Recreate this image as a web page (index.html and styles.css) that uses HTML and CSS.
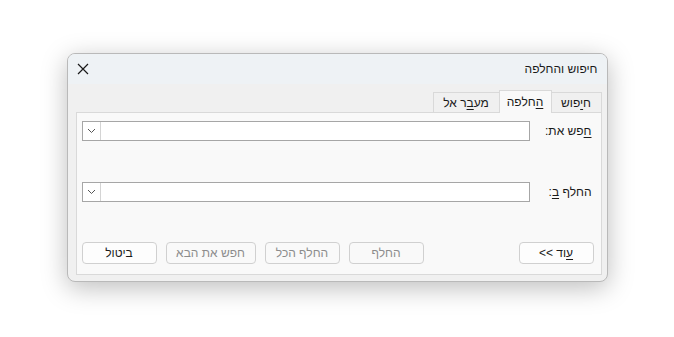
FILE: index.html
```html
<!DOCTYPE html>
<html lang="he" dir="rtl">
<head>
    <meta charset="UTF-8">
    <title>חיפוש והחלפה</title>
    <link rel="stylesheet" href="styles.css">
</head>
<body>
    <div class="dialog">
        <div class="title-bar">
            <span class="title">חיפוש והחלפה</span>
            <span class="close-button">
                <svg width="12" height="12" viewBox="0 0 12 12"><path d="M1 1 L11 11 M11 1 L1 11" stroke="#1a1a1a" stroke-width="1.2" fill="none"/></svg>
            </span>
        </div>
        <div class="dialog-body">
            <div class="tabs">
                <span class="tab tab-find">ח<u>י</u>פוש</span>
                <span class="tab tab-replace selected"><u>ה</u>חלפה</span>
                <span class="tab tab-goto">מע<u>ב</u>ר אל</span>
            </div>
            <div class="tab-panel">
                <div class="field-row">
                    <label class="field-label"><u>ח</u>פש את:</label>
                    <div class="combo">
                        <span class="combo-text"></span>
                        <span class="combo-arrow">
                            <svg width="9" height="6" viewBox="0 0 9 6"><path d="M1 1 L4.5 4.5 L8 1" stroke="#555" stroke-width="1" fill="none"/></svg>
                        </span>
                    </div>
                </div>
                <div class="field-row">
                    <label class="field-label">החלף <u>ב</u>:</label>
                    <div class="combo">
                        <span class="combo-text"></span>
                        <span class="combo-arrow">
                            <svg width="9" height="6" viewBox="0 0 9 6"><path d="M1 1 L4.5 4.5 L8 1" stroke="#555" stroke-width="1" fill="none"/></svg>
                        </span>
                    </div>
                </div>
                <div class="button-row">
                    <button class="dialog-button"><u>ע</u>וד &gt;&gt;</button>
                    <div class="button-group">
                        <button class="dialog-button" disabled>החלף</button>
                        <button class="dialog-button" disabled>החלף הכל</button>
                        <button class="dialog-button wide" disabled>חפש את הבא</button>
                        <button class="dialog-button">ביטול</button>
                    </div>
                </div>
            </div>
        </div>
    </div>
</body>
</html>
```

FILE: styles.css
```css
html, body {
    margin: 0;
    padding: 0;
}
body {
    font-family: "Liberation Sans", Arial, sans-serif;
    font-size: 12px;
    color: #1a1a1a;
    background-color: #ffffff;
    height: 337px;
    display: flex;
    align-items: center;
    justify-content: center;
}
u {
    text-decoration: underline;
    text-underline-offset: 2px;
}
.dialog {
    width: 541px;
    height: 229px;
    margin-top: -3px;
    box-sizing: border-box;
    border: 1px solid #b9b9b9;
    border-radius: 8px;
    background-color: #f0f0f0;
    box-shadow: 0 6px 26px rgba(0, 0, 0, 0.26);
    overflow: hidden;
    display: flex;
    flex-direction: column;
}
.title-bar {
    height: 31px;
    background-color: #eef2f5;
    display: flex;
    align-items: center;
    justify-content: space-between;
    padding: 0 9px 0 5px;
}
.title {
    font-size: 12px;
    padding-top: 1px;
}
.close-button {
    display: flex;
    align-items: center;
    justify-content: center;
    width: 20px;
    height: 12px;
}
.dialog-body {
    flex: 1;
    padding: 6px 5px 6px 8px;
    display: flex;
    flex-direction: column;
}
.tabs {
    display: flex;
    align-items: flex-end;
    height: 22px;
}
.tab {
    height: 19px;
    line-height: 19px;
    box-sizing: border-box;
    border: 1px solid #d9d9d9;
    border-bottom: none;
    background-color: #f0f0f0;
    margin-left: -1px;
    white-space: nowrap;
    text-align: center;
}
.tab-find {
    width: 51px;
    height: 20px;
    line-height: 20px;
}
.tab-replace {
    width: 53px;
}
.tab-goto {
    width: 67px;
    height: 20px;
    line-height: 20px;
}
.tab.selected {
    height: 23px;
    line-height: 23px;
    background-color: #f9f9f9;
    position: relative;
    top: 1px;
    z-index: 1;
}
.tab-panel {
    flex: 1;
    border: 1px solid #d9d9d9;
    background-color: #f9f9f9;
    padding: 8px 7px 10px 5px;
    display: flex;
    flex-direction: column;
}
.field-row {
    display: flex;
    align-items: center;
    height: 20px;
    margin-bottom: 40px;
}
.field-row + .field-row {
    margin-top: 1px;
}
.field-label {
    width: 62px;
    flex-shrink: 0;
    white-space: nowrap;
    padding-right: 2px;
}
.combo {
    flex: 1;
    height: 20px;
    box-sizing: border-box;
    border: 1px solid #a6a6a6;
    background-color: #ffffff;
    display: flex;
}
.combo-text {
    flex: 1;
}
.combo-arrow {
    width: 17px;
    border-right: 1px solid #d4d4d4;
    display: flex;
    align-items: center;
    justify-content: center;
}
.button-row {
    margin-top: auto;
    display: flex;
    justify-content: space-between;
    align-items: center;
}
.button-group {
    display: flex;
    gap: 9px;
}
.dialog-button {
    font-family: "Liberation Sans", Arial, sans-serif;
    font-size: 12px;
    color: #1a1a1a;
    width: 75px;
    height: 22px;
    padding: 0;
    border: 1px solid #d0d0d0;
    border-radius: 4px;
    background-color: #fdfdfd;
}
.dialog-button.wide {
    width: 90px;
}
.dialog-button:disabled {
    color: #8c8c8c;
    background-color: #f9f9f9;
}
```
